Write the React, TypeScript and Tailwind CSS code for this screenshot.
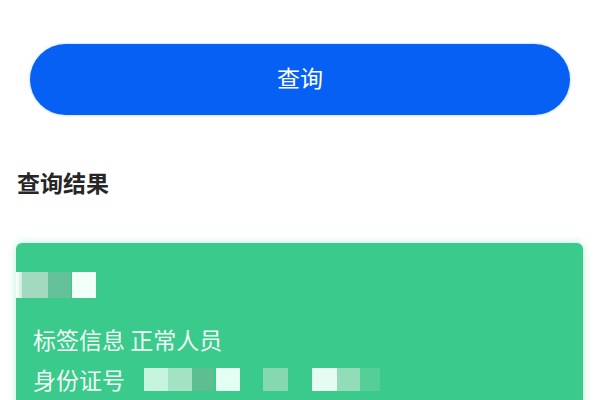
const cjk = { fontFamily: '"Noto Sans CJK SC", "Noto Sans", sans-serif' };

const App = () => {
  return (
    <div className="w-full h-[400px] overflow-hidden bg-white" style={cjk}>
      {/* Query button */}
      <div className="px-[30px] pt-[44px]">
        <button className="w-full h-[71px] pb-[5px] rounded-full bg-[#0660f3] text-white text-[23px] leading-none flex items-center justify-center shadow-[0_0_3px_rgba(6,96,243,0.35)]">
          查询
        </button>
      </div>

      {/* Title */}
      <h2 className="mt-[52px] px-[17px] text-[23px] leading-[30px] font-bold text-[#262626]">
        查询结果
      </h2>

      {/* Result card */}
      <div className="mt-[46px] ml-[16px] mr-[17px] rounded-[6px] bg-[#3aca8b] pt-[29px] pb-4 shadow-[0_0_8px_rgba(59,202,139,0.35)] text-[#f0fbf5]">
        {/* Masked name */}
        <div className="flex h-[26px]">
          <div className="w-[6px] bg-gradient-to-r from-[#ffffff] to-[#c9ecdb]" />
          <div className="w-[26px] bg-[#a3d9c0]" />
          <div className="w-[23px] bg-[#62c198]" />
          <div className="w-[1px]" />
          <div className="w-[24px] bg-[#f2fff9]" />
        </div>

        <div className="mt-[21px] pl-[17px] text-[23px] leading-[40px]">标签信息 正常人员</div>

        <div className="pl-[17px] flex items-center text-[23px] leading-[40px]">
          <span>身份证号</span>
          <div className="ml-[19px] flex h-[23px]">
            <div className="w-[24px] bg-[#c6f4de]" />
            <div className="w-[24px] bg-[#a3e2c3]" />
            <div className="w-[22px] bg-[#5dbf91]" />
            <div className="w-[2px]" />
            <div className="w-[24px] bg-[#e3fff4]" />
            <div className="w-[23px]" />
            <div className="w-[25px] bg-[#86d8b1]" />
            <div className="w-[24px]" />
            <div className="w-[25px] bg-[#e6fbf1]" />
            <div className="w-[23px] bg-[#93dcba]" />
            <div className="w-[20px] bg-[#55cf98]" />
          </div>
        </div>
      </div>
    </div>
  );
};

export default App;
